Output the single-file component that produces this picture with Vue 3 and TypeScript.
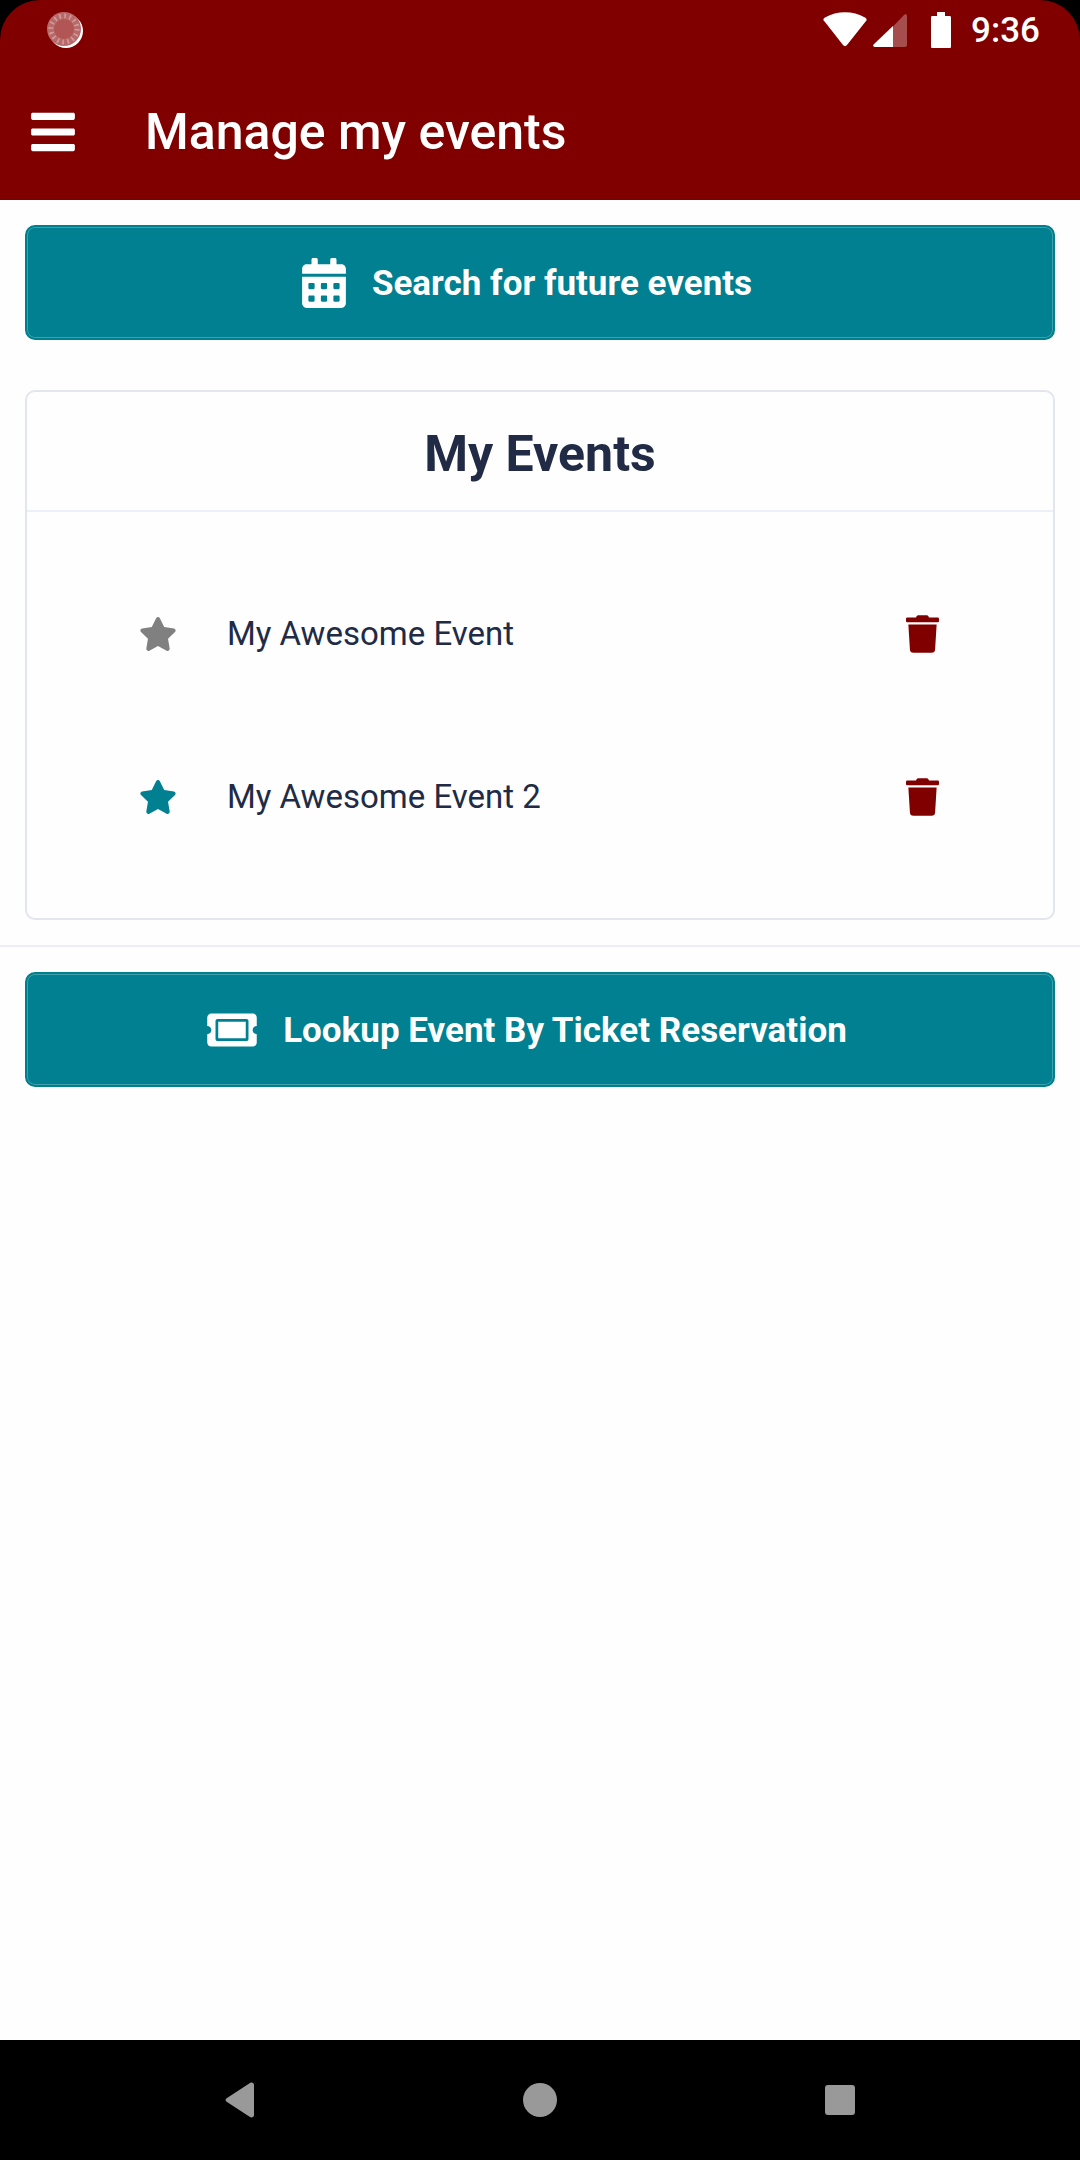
<script setup lang="ts">
import { ref } from 'vue'

interface EventItem {
  id: number
  name: string
  favourite: boolean
}

const events = ref<EventItem[]>([
  { id: 1, name: 'My Awesome Event', favourite: false },
  { id: 2, name: 'My Awesome Event 2', favourite: true },
])

function toggleFavourite(item: EventItem): void {
  item.favourite = !item.favourite
}

function removeEvent(id: number): void {
  events.value = events.value.filter((item) => item.id !== id)
}
</script>

<template>
  <div class="screen">
    <div class="top-wrap">
      <header class="top">
        <div class="status">
          <svg class="status-sync" viewBox="0 0 36 36" aria-hidden="true">
            <circle cx="19" cy="19" r="17" fill="#fff" />
            <circle cx="17" cy="17" r="17" fill="#b86a6a" />
            <circle cx="17" cy="17" r="13" fill="none" stroke="#d09c9c" stroke-width="5" stroke-dasharray="1.6 3.5" />
            <circle cx="17" cy="17" r="10" fill="#b25555" />
          </svg>
          <div class="status-right">
            <svg class="status-wifi" viewBox="0 0 44 36" aria-hidden="true">
              <path d="M1.600 9.600C-.2 8 .2 6.800 2 5.600 14-1.700 30-1.700 42 5.600c1.800 1.200 2.200 2.400.6 4L24 33c-1.300 1.500-2.700 1.500-4 0z" fill="#fff" />
            </svg>
            <svg class="status-signal" viewBox="0 0 34 36" aria-hidden="true">
              <path d="M20 14.500 31 3c1.200-1.200 3-.7 3 1v29c0 1.300-.7 2-2 2H20z" fill="#a64d4d" />
              <path d="M20 14v21H2c-1.800 0-2.500-1.500-1.200-2.800z" fill="#fff" />
            </svg>
            <svg class="status-battery" viewBox="0 0 20 36" aria-hidden="true">
              <path d="M6 0h8v4h4.500c1 0 1.500.5 1.500 1.500v29c0 1-.5 1.500-1.500 1.500h-17C.5 36 0 35.500 0 34.500v-29C0 4.500.5 4 1.500 4H6z" fill="#fff" />
            </svg>
            <span class="time">9:36</span>
          </div>
        </div>
        <div class="app-bar">
          <button class="icon-button menu" type="button" aria-label="Open menu">
            <svg viewBox="0 0 448 512" aria-hidden="true">
              <path d="M16 132h416c8.837 0 16-7.163 16-16V76c0-8.837-7.163-16-16-16H16C7.163 60 0 67.163 0 76v40c0 8.837 7.163 16 16 16zm0 160h416c8.837 0 16-7.163 16-16v-40c0-8.837-7.163-16-16-16H16c-8.837 0-16 7.163-16 16v40c0 8.837 7.163 16 16 16zm0 160h416c8.837 0 16-7.163 16-16v-40c0-8.837-7.163-16-16-16H16c-8.837 0-16 7.163-16 16v40c0 8.837 7.163 16 16 16z" />
            </svg>
          </button>
          <h1>Manage my events</h1>
        </div>
      </header>
    </div>

    <main>
      <section class="block">
        <button class="action" type="button">
          <svg class="calendar" viewBox="0 0 448 512" aria-hidden="true">
            <path d="M0 464c0 26.500 21.500 48 48 48h352c26.500 0 48-21.500 48-48V192H0v272zm320-196c0-6.600 5.400-12 12-12h40c6.600 0 12 5.400 12 12v40c0 6.600-5.400 12-12 12h-40c-6.600 0-12-5.400-12-12v-40zm0 128c0-6.600 5.400-12 12-12h40c6.600 0 12 5.400 12 12v40c0 6.600-5.400 12-12 12h-40c-6.600 0-12-5.400-12-12v-40zM192 268c0-6.600 5.400-12 12-12h40c6.600 0 12 5.400 12 12v40c0 6.600-5.400 12-12 12h-40c-6.600 0-12-5.400-12-12v-40zm0 128c0-6.600 5.400-12 12-12h40c6.600 0 12 5.400 12 12v40c0 6.600-5.400 12-12 12h-40c-6.600 0-12-5.400-12-12v-40zM64 268c0-6.600 5.400-12 12-12h40c6.600 0 12 5.400 12 12v40c0 6.600-5.400 12-12 12H76c-6.600 0-12-5.400-12-12v-40zm0 128c0-6.600 5.400-12 12-12h40c6.600 0 12 5.400 12 12v40c0 6.600-5.400 12-12 12H76c-6.600 0-12-5.400-12-12v-40zM400 64h-48V16c0-8.800-7.200-16-16-16h-32c-8.800 0-16 7.200-16 16v48H160V16c0-8.800-7.200-16-16-16h-32c-8.800 0-16 7.200-16 16v48H48C21.500 64 0 85.500 0 112v48h448v-48c0-26.500-21.500-48-48-48z" />
          </svg>
          <span>Search for future events</span>
        </button>
      </section>

      <section class="block">
        <div class="card">
          <h2>My Events</h2>
          <ul>
            <li v-for="item in events" :key="item.id">
              <button
                class="icon-button star"
                :class="{ active: item.favourite }"
                type="button"
                :aria-label="`Favourite ${item.name}`"
                :aria-pressed="item.favourite"
                @click="toggleFavourite(item)"
              >
                <svg viewBox="0 0 576 512" aria-hidden="true">
                  <path d="M259.300 17.800L194 150.200 47.900 171.500c-26.200 3.800-36.700 36.100-17.700 54.600l105.700 103-25 145.500c-4.500 26.300 23.200 46 46.400 33.700L288 439.600l130.700 68.700c23.200 12.200 50.900-7.400 46.400-33.700l-25-145.500 105.700-103c19-18.500 8.500-50.800-17.700-54.600L382 150.200 316.700 17.800c-11.700-23.600-45.600-23.900-57.400 0z" />
                </svg>
              </button>
              <span class="name">{{ item.name }}</span>
              <button
                class="icon-button trash"
                type="button"
                :aria-label="`Delete ${item.name}`"
                @click="removeEvent(item.id)"
              >
                <svg viewBox="0 0 448 512" aria-hidden="true">
                  <path d="M432 32H312l-9.400-18.700A24 24 0 0 0 281.100 0H166.800a23.720 23.720 0 0 0-21.400 13.300L136 32H16A16 16 0 0 0 0 48v32a16 16 0 0 0 16 16h416a16 16 0 0 0 16-16V48a16 16 0 0 0-16-16zM53.200 467a48 48 0 0 0 47.900 45h245.800a48 48 0 0 0 47.900-45L416 128H32z" />
                </svg>
              </button>
            </li>
          </ul>
        </div>
      </section>

      <section class="block lookup">
        <button class="action" type="button">
          <svg class="ticket" viewBox="0 0 576 512" aria-hidden="true">
            <path d="M128 160h320v192H128V160zm400 96c0 26.510 21.490 48 48 48v96c0 26.510-21.490 48-48 48H48c-26.510 0-48-21.490-48-48v-96c26.510 0 48-21.490 48-48s-21.490-48-48-48v-96c0-26.510 21.490-48 48-48h480c26.510 0 48 21.490 48 48v96c-26.510 0-48 21.490-48 48zm-48-104c0-13.255-10.745-24-24-24H120c-13.255 0-24 10.745-24 24v208c0 13.255 10.745 24 24 24h336c13.255 0 24-10.745 24-24V152z" />
          </svg>
          <span>Lookup Event By Ticket Reservation</span>
        </button>
      </section>
    </main>

    <nav class="system-nav" aria-label="System navigation">
      <button type="button" aria-label="Back">
        <svg viewBox="0 0 36 36" aria-hidden="true">
          <path d="M28 1C30 0 32 1 32 3v30c0 2-2 3-4 2L5 20c-2-1.300-2-2.700 0-4z" />
        </svg>
      </button>
      <button type="button" aria-label="Home">
        <svg viewBox="0 0 36 36" aria-hidden="true"><circle cx="18" cy="18" r="17" /></svg>
      </button>
      <button type="button" aria-label="Recent apps">
        <svg viewBox="0 0 36 36" aria-hidden="true"><rect x="3" y="3" width="30" height="30" rx="3" /></svg>
      </button>
    </nav>
  </div>
</template>

<style>
body {
  margin: 0;
}
</style>

<style scoped>
* {
  box-sizing: border-box;
}

.screen {
  display: flex;
  flex-direction: column;
  min-height: 100vh;
  background: #fefefe;
  color: #222b45;
  font-family: Roboto, 'Liberation Sans', sans-serif;
}

button {
  margin: 0;
  padding: 0;
  border: 0;
  background: none;
  font: inherit;
  cursor: pointer;
}

svg {
  display: block;
  flex: none;
}

.top-wrap {
  background: #000;
}

.top {
  border-radius: 40px 40px 0 0;
  background: #800000;
  color: #fff;
}

.status {
  display: flex;
  align-items: center;
  justify-content: space-between;
  height: 60px;
  padding: 0 40px 0 47px;
}

.status-sync {
  width: 36px;
  height: 36px;
}

.status-right {
  display: flex;
  align-items: center;
}

.status-wifi {
  width: 44px;
  height: 36px;
}

.status-signal {
  width: 34px;
  height: 36px;
  margin-left: 6px;
}

.status-battery {
  width: 20px;
  height: 36px;
  margin: 0 20px 0 24px;
}

.time {
  padding-top: 2px;
  font-size: 35px;
  font-weight: 500;
  line-height: 48px;
}

.app-bar {
  display: flex;
  align-items: center;
  gap: 70px;
  height: 140px;
  padding: 4px 31px 0;
}

.icon-button svg {
  fill: currentColor;
}

.menu {
  color: #fff;
}

.menu svg {
  width: 44px;
  height: 50px;
}

h1,
h2 {
  margin: 0;
  font-size: 50px;
  line-height: 60px;
}

h1 {
  font-weight: 500;
}

main {
  flex: 1;
}

.block {
  padding: 25px;
}

.lookup {
  border-top: 2px solid #edeef3;
}

.action {
  display: flex;
  align-items: center;
  justify-content: center;
  width: 100%;
  min-height: 115px;
  border: 2px solid #007f8c;
  border-radius: 10px;
  background: #008090;
  box-shadow: inset 0 0 0 1px #409fab;
  color: #fff;
  font-size: 35px;
  font-weight: 700;
  line-height: 48px;
}

.action svg {
  fill: currentColor;
}

.action span {
  padding: 2px 26px 0;
}

.calendar {
  width: 44px;
  height: 50px;
}

.ticket {
  width: 50px;
  height: 44px;
}

.card {
  border: 2px solid #e4e6ee;
  border-radius: 10px;
}

h2 {
  padding: 32px 40px 26px;
  border-bottom: 2px solid #edf0f6;
  font-weight: 700;
  text-align: center;
}

ul {
  margin: 0;
  padding: 40px 114px 40px 112px;
  list-style: none;
}

li {
  display: flex;
  align-items: center;
  height: 163px;
}

.name {
  flex: 1;
  padding: 0 50px;
  font-size: 33px;
  line-height: 48px;
}

.star {
  color: #808080;
}

.star.active {
  color: #008090;
}

.star svg {
  width: 38px;
  height: 34px;
}

.trash {
  color: #800000;
}

.trash svg {
  width: 33px;
  height: 38px;
}

.system-nav {
  display: flex;
  height: 120px;
  padding: 0 90px;
  background: #000;
}

.system-nav button {
  display: flex;
  flex: 1;
  align-items: center;
  justify-content: center;
}

.system-nav svg {
  width: 36px;
  height: 36px;
  fill: #999;
}
</style>
